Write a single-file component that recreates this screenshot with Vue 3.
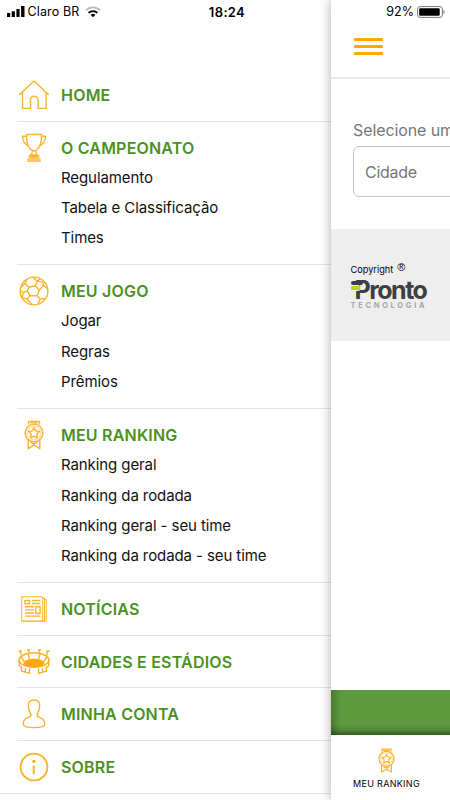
<script setup>
const sections = [
  { icon: 'home', title: 'HOME', items: [] },
  {
    icon: 'trophy',
    title: 'O CAMPEONATO',
    items: ['Regulamento', 'Tabela e Classificação', 'Times'],
  },
  {
    icon: 'ball',
    title: 'MEU JOGO',
    items: ['Jogar', 'Regras', 'Prêmios'],
  },
  {
    icon: 'medal',
    title: 'MEU RANKING',
    items: [
      'Ranking geral',
      'Ranking da rodada',
      'Ranking geral - seu time',
      'Ranking da rodada - seu time',
    ],
  },
  { icon: 'news', title: 'NOTÍCIAS', items: [] },
  { icon: 'stadium', title: 'CIDADES E ESTÁDIOS', items: [] },
  { icon: 'user', title: 'MINHA CONTA', items: [] },
  { icon: 'info', title: 'SOBRE', items: [] },
];
</script>

<template>
  <div class="screen">
    <!-- shared icon shapes -->
    <svg class="sprite" aria-hidden="true">
      <symbol id="home" viewBox="0 0 32 32">
        <path d="M1.3 15.8 16 2l14.7 13.8M4.5 13.2v16.2h8V21a3.8 3.8 0 0 1 7.6 0v8.4h8V13.2" />
      </symbol>
      <symbol id="trophy" viewBox="0 0 32 32">
        <path d="M8.4 2.500h15.200c0 7.500-1.800 14.200-6.100 16.200h-3C10.200 16.700 8.400 10 8.400 2.500zM8.400 4.200H4.500c.2 5.600 2.300 8.500 6.600 9.800M23.600 4.200h3.900c-.2 5.600-2.300 8.500-6.600 9.800M14.500 18.800c.1 2.400-.7 3.200-2 4.200h7c-1.300-1-2.100-1.800-2-4.200" />
        <path class="solid" fill-opacity=".65" d="M10.500 23h11v3.500h1.300V30H9.200v-3.500h1.300z" />
        <path d="M12.500 25h7" />
      </symbol>
      <symbol id="ball" viewBox="0 0 32 32">
        <circle cx="16" cy="16" r="13.900" />
        <path d="m11 12.200 6.200-1.500 4.200 4.400-2.300 5.600-7 .1-2.900-4.900zM11 12.200 7.100 8.300l1.600-3M17.200 10.700l2-4.600-4-3.700M19.200 6.100l5.300 1 .9 3.100 4.200 3.900M21.400 15.100l4-4.900M19.100 20.700l3.100 3.400-2.400 4.800M22.200 24.100l5.400-.7M12.100 20.800 9 24.200l4.700 4.700M9 24.200l-4.800-1.600M9.200 15.900l-4 1.600-2.800-1.700M5.200 17.500l-1 5.100M7.100 8.300l-4.300 4.100M19.200 6.100l3-2.200" />
      </symbol>
      <symbol id="medal" viewBox="0 0 32 32">
        <circle cx="16" cy="14" r="8.900" />
        <circle cx="16" cy="14" r="7" stroke-width=".6" />
        <path d="M10.500 5.600V2.400h11v3.200M12 3.900h8M10.200 21v8.700l5.800-3.500 5.800 3.500V21M12.500 23.300l3.500 1.600 3.500-1.600M16 8.600l1.700 3.300 3.700.6-2.600 2.600.5 3.700-3.300-1.700-3.300 1.700.5-3.700-2.600-2.600 3.700-.6z" />
      </symbol>
      <symbol id="news" viewBox="0 0 32 32">
        <path stroke-width="1" d="M3.700 3.800h21v24.400h-21zM24.700 5.300h1.800v22.900h-1.800M26.500 6.500h1.700v21.700H3.700" />
        <path d="M7 7.500h4.500v3.200H7zM14 7.500h8.200M14 10.500h8.200M7 13.800h9M7 16.900h9M7 20h9M7 23.100h15M17.800 13.800h4.300v6.700h-4.300z" />
      </symbol>
      <symbol id="stadium" viewBox="0 0 32 32">
        <ellipse cx="16" cy="14" rx="14.900" ry="7.200" stroke-width="1.600" />
        <path class="solid" d="M5.200 17.300C7 13.900 11.500 12.800 16 12.800s9 1.100 10.800 4.500c-2 2.900-5.800 4-10.800 4s-8.800-1.100-10.800-4z" />
        <path d="M1.300 14.500v5.200l3 2.300M30.700 14.500v5.200l-3 2.300M3.300 11l3.500 5.500M28.700 11l-3.500 5.500M10 7.500l1.500 6M22 7.500l-1.500 6M3 9.500V5.500M29 9.500V5.500M11 7V4.500M21 7V4.500" />
        <path stroke-width="1.400" d="M3.500 20.300v4.700l8 2.300v-4.800M28.500 20.300v4.700l-8 2.300v-4.800M7.500 22v3.500M24.500 22v3.500" />
        <path stroke-width="1.900" d="M.6 5.300h3M28.400 5.300h3M9.300 4h2.500M20.200 4h2.500" />
      </symbol>
      <symbol id="user" viewBox="0 0 32 32">
        <path d="M16 2c3.800 0 5.700 1.800 5.700 5.500 0 4.800-1.500 6.600-2.500 8.300-.8 1.700.2 2.700 2.300 3.500 3.500 1.200 5.300 3.300 5.300 6.400 0 3.200-4.600 3.900-10.800 3.900S5.200 28.900 5.200 25.700c0-3.100 1.800-5.200 5.300-6.400 2.100-.8 3.100-1.800 2.300-3.500-1-1.700-2.500-3.500-2.500-8.300C10.300 3.800 12.200 2 16 2z" />
      </symbol>
      <symbol id="info" viewBox="0 0 32 32">
        <circle cx="16" cy="16" r="13.400" stroke-width="1.900" />
        <path stroke-width="2" d="M15.700 14.500v8.800" />
        <circle class="solid" cx="16" cy="10.300" r="1.600" />
      </symbol>
    </svg>

    <nav class="menu">
      <section v-for="s in sections" :key="s.icon" class="section">
        <div class="heading">
          <svg class="icon"><use :href="'#' + s.icon" /></svg>
          <span class="title">{{ s.title }}</span>
        </div>
        <ul v-if="s.items.length" class="items">
          <li v-for="item in s.items" :key="item">{{ item }}</li>
        </ul>
      </section>
      <div class="menu-end"></div>
    </nav>

    <main class="page">
      <header class="topbar">
        <div class="burger"><i></i><i></i><i></i></div>
      </header>
      <div class="form">
        <label>Selecione um</label>
        <div class="select">Cidade</div>
      </div>
      <div class="credits">
        <div class="copyright">Copyright <span class="reg">®</span></div>
        <div class="brand">Pronto</div>
        <div class="brand-sub">TECNOLOGIA</div>
      </div>
      <div class="spacer"></div>
      <div class="banner"></div>
      <footer class="tabbar">
        <svg class="tab-icon"><use href="#medal" /></svg>
        <span>MEU RANKING</span>
      </footer>
    </main>

    <div class="status">
      <div class="carrier">
        <svg width="18" height="11" viewBox="0 0 18 11">
          <path d="M0 7h3.200v4H0zM4.700 5.200h3.200V11H4.700zM9.400 3h3.200v8H9.400zM14.100 0h3.400v11h-3.400z" />
        </svg>
        <span>Claro BR</span>
        <svg class="wifi" width="16" height="12" viewBox="0 0 16 12">
          <path class="faint" d="M1 4.300a10 10 0 0 1 14 0" />
          <path class="wave" d="M3.600 6.900a6.300 6.300 0 0 1 8.800 0" />
          <path d="m8 11.300-2.400-2.500a3.500 3.500 0 0 1 4.800 0z" />
        </svg>
      </div>
      <strong>18:24</strong>
      <div class="power">
        <span>92%</span>
        <svg width="28" height="12" viewBox="0 0 28 12">
          <rect x=".6" y=".6" width="24.800" height="10.800" rx="2.500" fill="none" stroke="#777" />
          <rect x="2.200" y="2.200" width="20.500" height="7.600" rx="1" />
          <path d="M26.500 4v4c1.500-.5 1.500-3.500 0-4z" fill="#777" />
        </svg>
      </div>
    </div>
  </div>
</template>

<style>
body {
  margin: 0;
  background: #fff;
}
</style>

<style scoped>
.screen {
  position: relative;
  display: flex;
  width: 450px;
  height: 800px;
  overflow: hidden;
  background: #fff;
  font-family: Inter, "Liberation Sans", sans-serif;
  color: #111;
}

.sprite {
  position: absolute;
  width: 0;
  height: 0;
}

symbol {
  fill: none;
  stroke: #fbb42c;
  stroke-width: 1.4;
  stroke-linejoin: round;
}

.solid {
  fill: #fda90c;
  stroke: none;
}

/* status bar lies over both the menu and the page */
.status {
  position: absolute;
  top: 0;
  left: 0;
  width: 450px;
  height: 23px;
  box-sizing: border-box;
  padding: 0 5px 0 7px;
  display: grid;
  grid-template-columns: 1fr auto 1fr;
  align-items: center;
  font-size: 12.5px;
  color: #000;
}

.status strong {
  font-size: 13px;
  font-weight: 600;
  letter-spacing: 0.35px;
  margin-left: 2px;
}

.carrier,
.power {
  display: flex;
  align-items: center;
}

.carrier {
  gap: 2.5px;
  letter-spacing: 0.12px;
}

.power {
  justify-content: flex-end;
  gap: 3px;
}

.wifi {
  margin-left: 3px;
}

.wifi .faint,
.wifi .wave {
  fill: none;
  stroke: #000;
  stroke-width: 1.8;
}

.wifi .faint {
  stroke: #bbb;
}

.menu {
  flex: none;
  width: 330.5px;
  padding-top: 69px;
  box-sizing: border-box;
}

.section {
  margin-left: 17px;
  padding: 12px 0 11.6px;
  border-bottom: 1px solid #e4e4e4;
}

.section:nth-last-child(2) {
  border-bottom: none;
  padding-bottom: 12px;
}

.menu-end {
  height: 1px;
  background: #e2e2e2;
}

.heading {
  display: flex;
  align-items: center;
  height: 28px;
}

.icon {
  flex: none;
  width: 32px;
  height: 32px;
  margin: 0 11px 0 1px;
}

.title {
  font-size: 16px;
  font-weight: 600;
  letter-spacing: 0.2px;
  color: #4b911f;
  white-space: nowrap;
}

.items {
  margin: 0;
  padding: 0 0 0 44px;
  list-style: none;
}

.items li {
  height: 30.4px;
  line-height: 31.6px;
  font-size: 15px;
  letter-spacing: -0.09px;
  white-space: nowrap;
}

.page {
  flex: 1;
  min-width: 0;
  display: flex;
  flex-direction: column;
  background: #fff;
  box-shadow: 0 0 11px rgba(0, 0, 0, 0.33);
  white-space: nowrap;
}

.topbar {
  height: 78.5px;
  border-bottom: 2px solid #eaeaea;
  padding: 38px 0 0 23.5px;
  box-sizing: border-box;
  flex: none;
}

.burger {
  display: flex;
  flex-direction: column;
  gap: 4.2px;
  width: 29px;
}

.burger i {
  height: 3px;
  border-radius: 1px;
  background: #ffa900;
}

.form {
  height: 150.7px;
  flex: none;
  box-sizing: border-box;
  padding: 41.5px 0 0 22.5px;
  color: #777;
  font-size: 16px;
}

.form label {
  display: block;
  height: 26px;
  line-height: 21px;
  letter-spacing: -0.1px;
}

.select {
  width: 160px;
  height: 51px;
  line-height: 50px;
  box-sizing: border-box;
  padding-left: 11px;
  border: 1px solid #c4c4c4;
  border-radius: 6px;
  letter-spacing: -0.3px;
}

.credits {
  flex: none;
  height: 112px;
  box-sizing: border-box;
  padding: 33px 0 0 20px;
  background: #eee;
}

.copyright {
  display: flex;
  gap: 4px;
  height: 17px;
  line-height: 16px;
  font-size: 9.2px;
  color: #000;
}

.reg {
  font-family: "Liberation Sans", sans-serif;
  font-size: 11px;
  line-height: 10px;
}

.brand {
  position: relative;
  height: 22.5px;
  line-height: 22px;
  padding-left: 4px;
  font-size: 25px;
  font-weight: 700;
  letter-spacing: -1.5px;
  color: #3d4042;
}

/* dark and green bars reaching left of the P */
.brand::before,
.brand::after {
  content: "";
  position: absolute;
  left: 0;
  height: 4px;
  border-radius: 2px;
}

.brand::before {
  top: 1.5px;
  width: 12px;
  background: #3d4042;
}

.brand::after {
  top: 6px;
  width: 9px;
  border: solid #eee;
  border-width: 1px 0;
  background: #b6d51c;
}

.brand-sub {
  height: 8px;
  line-height: 8px;
  font-size: 7.5px;
  font-weight: 700;
  letter-spacing: 2.7px;
  color: #a8a8a8;
}

.spacer {
  flex: 1;
}

.banner {
  flex: none;
  height: 45px;
  background: linear-gradient(to right, rgba(0, 0, 0, 0.22), transparent 10px),
    linear-gradient(to top, rgba(0, 0, 0, 0.4), rgba(0, 0, 0, 0.12) 5px, transparent 11px),
    #5d9a3f;
}

.tabbar {
  flex: none;
  height: 65px;
  width: 112px;
  display: flex;
  flex-direction: column;
  align-items: center;
  box-sizing: border-box;
  padding-top: 12px;
  gap: 4px;
  font-size: 9px;
  letter-spacing: 0.3px;
  color: #000;
}

.tab-icon {
  width: 27px;
  height: 27px;
}
</style>
